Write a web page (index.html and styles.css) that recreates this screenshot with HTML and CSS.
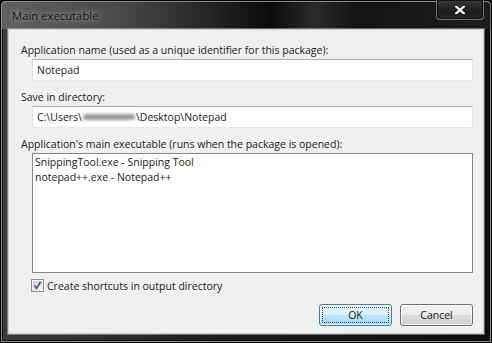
FILE: index.html
```html
<!DOCTYPE html>
<html lang="en">
<head>
    <meta charset="UTF-8">
    <meta name="viewport" content="width=device-width, initial-scale=1.0">
    <title>Main executable</title>
    <link rel="stylesheet" href="styles.css">
</head>
<body>
    <div class="window">
        <div class="titlebar">
            <span class="title">Main executable</span>
            <div class="close-btn">
                <svg width="10" height="8" viewBox="0 0 10 8">
                    <path d="M1 0.5 L9 7.5 M9 0.5 L1 7.5" stroke="#fff" stroke-width="2.2" stroke-linecap="square"/>
                </svg>
            </div>
        </div>

        <div class="client">
            <label class="field-label first">Application name (used as a unique identifier for this package):</label>
            <div class="textbox">Notepad</div>

            <label class="field-label">Save in directory:</label>
            <div class="textbox">C:\Users\<span class="smudge"></span>\Desktop\Notepad</div>

            <label class="field-label">Application's main executable (runs when the package is opened):</label>
            <div class="listbox">
                <div class="list-item">SnippingTool.exe - Snipping Tool</div>
                <div class="list-item">notepad++.exe - Notepad++</div>
            </div>

            <div class="check-row">
                <span class="checkbox">
                    <svg width="11" height="11" viewBox="0 0 11 11">
                        <path d="M2.5 5.5 L4.6 8.2 L8.6 1.8" fill="none" stroke="#44598f" stroke-width="1.7"/>
                    </svg>
                </span>
                <span>Create shortcuts in output directory</span>
            </div>

            <div class="buttons">
                <div class="btn btn-default"><span class="focus">OK</span></div>
                <div class="btn">Cancel</div>
            </div>
        </div>
    </div>
</body>
</html>
```

FILE: styles.css
```css
body {
    margin: 0;
    background-color: #000;
    font-family: "Open Sans", "Noto Sans", sans-serif;
    font-size: 10.5px;
    color: #1a1a1a;
}
.window {
    width: 492px;
    height: 343px;
    box-sizing: border-box;
    display: flex;
    flex-direction: column;
    border: 1px solid #000;
    border-radius: 6px 6px 0 0;
    background: linear-gradient(90deg, #3c3c3c 0%, #1c1c1c 45%, #0e0e0e 100%);
    box-shadow: inset 0 0 0 1px #8a8a8a, inset 0 0 0 2px #111;
}
.titlebar {
    height: 28px;
    display: flex;
    justify-content: space-between;
    align-items: flex-start;
    border-radius: 5px 5px 0 0;
    background: linear-gradient(90deg, #5f5f5f 0%, #4c4c4c 22%, #262626 42%, #0b0b0b 55%, #2a2a2a 64%, #141414 72%, #1c1c1c 100%);
    box-shadow: inset 0 1px 0 #8a8a8a, inset 1px 0 0 #8a8a8a, inset -1px 0 0 #6a6a6a;
}
.title {
    margin: 7px 0 0 11px;
    font-size: 11.3px;
    color: #141414;
    text-shadow: 0 0 5px rgba(255, 255, 255, 0.55), 0 0 10px rgba(255, 255, 255, 0.35);
}
.close-btn {
    width: 46px;
    height: 19px;
    margin: -1px 7px 0 0;
    display: flex;
    align-items: center;
    justify-content: center;
    border: 1px solid #707070;
    border-top: none;
    border-radius: 0 0 4px 4px;
    background: linear-gradient(#3a3a3a, #1c1c1c 60%, #262626);
    box-shadow: inset 0 0 0 1px rgba(0, 0, 0, 0.6);
}
.client {
    flex: 1;
    margin: 0 7px 8px 7px;
    padding: 13px 10px 0 12px;
    display: flex;
    flex-direction: column;
    background-color: #f0f0f0;
    border: 1px solid #cfcfcf;
    box-shadow: 0 0 0 1px rgba(255, 255, 255, 0.35);
}
.field-label {
    display: block;
    line-height: 15px;
    margin-top: 9px;
}
.field-label.first {
    margin-top: 0;
}
.textbox {
    height: 20px;
    margin: 1px 0 0 11px;
    padding-left: 4px;
    line-height: 20px;
    background-color: #fff;
    border: 1px solid #e2e3ea;
    border-top-color: #abadb3;
    border-bottom-color: #e3e9ef;
    display: flex;
    align-items: center;
}
.smudge {
    display: inline-block;
    width: 52px;
    height: 6px;
    margin: 0 1px;
    border-radius: 3px;
    background-color: #9a9a9a;
    filter: blur(1.6px);
}
.listbox {
    height: 116px;
    margin: 1px 0 0 11px;
    padding: 1px 2px;
    background-color: #fff;
    border: 1px solid #828790;
}
.list-item {
    line-height: 15px;
}
.check-row {
    display: flex;
    align-items: center;
    gap: 3px;
    height: 13px;
    margin: 6px 0 0 10px;
}
.checkbox {
    width: 11px;
    height: 11px;
    display: flex;
    border: 1px solid #8e8f8f;
    background: linear-gradient(135deg, #cbd0d8, #f4f4f4);
    box-shadow: inset 0 0 0 1px #f4f4f4;
}
.buttons {
    display: flex;
    justify-content: flex-end;
    gap: 8px;
    margin-top: 12px;
}
.btn {
    width: 71px;
    height: 20px;
    display: flex;
    align-items: center;
    justify-content: center;
    border: 1px solid #707070;
    border-radius: 3px;
    background: linear-gradient(#f2f2f2 0%, #ebebeb 50%, #dddddd 51%, #cfcfcf 100%);
    box-shadow: inset 0 0 0 1px rgba(255, 255, 255, 0.7);
}
.btn-default {
    border-color: #3c7fb1;
    background: linear-gradient(#eaf6fd 0%, #d9f0fc 50%, #bee6fd 51%, #a7d9f5 100%);
}
.focus {
    flex: 1;
    align-self: stretch;
    margin: 2px;
    display: flex;
    align-items: center;
    justify-content: center;
    border: 1px dotted #3a3a3a;
}
```
